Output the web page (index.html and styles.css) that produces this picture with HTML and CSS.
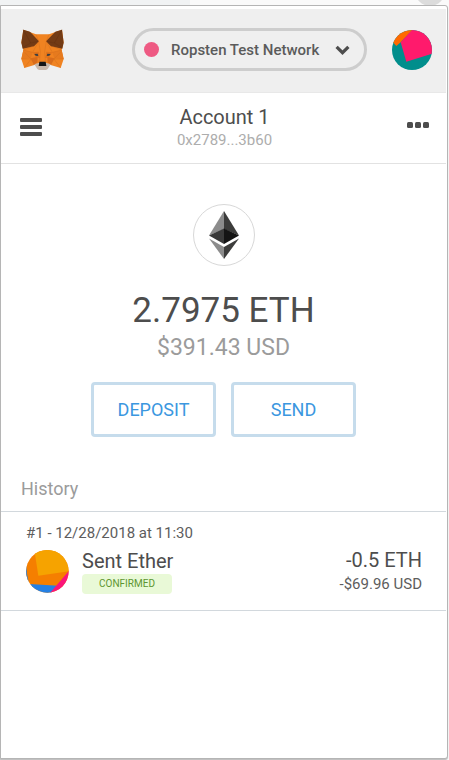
FILE: index.html
```
<!DOCTYPE html>
<html lang="en">
<head>
    <meta charset="UTF-8">
    <meta name="viewport" content="width=device-width, initial-scale=1.0">
    <title>MetaMask</title>
    <link rel="stylesheet" href="styles.css">
</head>
<body>
    <div class="browser-avatar"></div>
    <div class="popup">
        <header class="app-header">
            <svg class="fox" viewBox="63 90 129 123" aria-hidden="true">
                <!-- face -->
                <path fill="#f08321" d="M70 92 108 106H147L186 92 191 130 185 153 191 180 182 207 152 198H103L73 207 64 180 70 153 64 130Z"/>
                <path fill="#e67a1e" d="M70 153 98 160 92 178 64 180ZM185 153 157 160 163 178 191 180Z"/>
                <path fill="#d96c1a" d="M92 178 113 173 112 190 103 198ZM163 178 142 173 143 190 152 198Z"/>
                <path fill="#e0731c" d="M98 160 116 158 119 177 108 175ZM157 160 139 158 136 177 147 175Z"/>
                <!-- ears -->
                <path fill="#733b15" d="M70 92 90 98 117 127 102 142 68 149 64 131ZM186 92 166 98 138 127 153 142 187 149 191 131Z"/>
                <path fill="none" stroke="#5d2f10" stroke-width="1" d="M70 92 92 132 116 127M92 132 68 146M186 92 163 132 139 127M163 132 187 146"/>
                <path fill="none" stroke="#c8661a" stroke-width="1" d="M108 106 116 127 121 158 119 186M147 106 139 127 134 158 136 186M98 142 70 153 98 160 116 127M157 142 185 153 157 160 139 127M64 180H93L74 160M191 180H162L181 160M93 180 73 207M162 180 182 207M93 180 103 198M162 180 152 198"/>
                <!-- eyes -->
                <path fill="#3a3f42" d="M103 165 113 164 115 171 107 170ZM152 165 142 164 140 171 148 170Z"/>
                <!-- chin and nose -->
                <path fill="#c9b8aa" d="M103 196 115 192H140L152 196 143 210 138 213H117L112 210Z"/>
                <path fill="#161616" d="M118 188H137L139 201H116Z"/>
            </svg>

            <label class="network">
                <span class="network-dot"></span>
                <select class="network-select" aria-label="Network">
                    <option>Ropsten Test Network</option>
                </select>
                <svg class="network-arrow" viewBox="0 0 14 9" aria-hidden="true">
                    <path d="M1.5 1.5 7 7 12.5 1.5" fill="none" stroke="#4d4d4d" stroke-width="3"/>
                </svg>
            </label>

            <button class="icon-button" aria-label="My accounts">
                <svg class="account-avatar" viewBox="36 90 120 120">
                    <clipPath id="account-clip"><circle cx="96" cy="150" r="60"/></clipPath>
                    <g clip-path="url(#account-clip)">
                        <path fill="#018e8c" d="M36 90h120v120H36z"/>
                        <path fill="#ff6a00" d="M36 90H97L62 127 49 138 36 124Z"/>
                        <path fill="#ff1a6c" d="M98 88 62 127 79 185 158 161V88Z"/>
                    </g>
                </svg>
            </button>
        </header>

        <div class="account-bar">
            <button class="icon-button" aria-label="Menu">
                <svg class="menu-icon" viewBox="0 0 22 18" fill="#4d4d4d">
                    <rect y="0" width="22" height="4" rx="1"/>
                    <rect y="7" width="22" height="4" rx="1"/>
                    <rect y="14" width="22" height="4" rx="1"/>
                </svg>
            </button>
            <div class="account">
                <div class="account-name">Account 1</div>
                <div class="account-address">0x2789...3b60</div>
            </div>
            <button class="icon-button" aria-label="Account options">
                <svg class="dots-icon" viewBox="0 0 22 10" fill="#4d4d4d">
                    <rect x="0" width="6" height="6" rx="1.5"/>
                    <rect x="8" width="6" height="6" rx="1.5"/>
                    <rect x="16" width="6" height="6" rx="1.5"/>
                </svg>
            </button>
        </div>

        <main class="overview">
            <div class="token-icon">
                <svg class="eth-icon" viewBox="0 0 30 48" aria-hidden="true">
                    <path fill="#8c8c8c" d="M15 0 0 24.5 15 18Z"/>
                    <path fill="#3c3c3b" d="M15 0 30 24.5 15 18Z"/>
                    <path fill="#393939" d="M15 17.5 0 24.5 15 33Z"/>
                    <path fill="#141414" d="M15 17.5 30 24.5 15 33Z"/>
                    <path fill="#8c8c8c" d="M0 27.5 15 36V48Z"/>
                    <path fill="#3c3c3b" d="M30 27.5 15 36V48Z"/>
                </svg>
            </div>
            <div class="balance">2.7975 ETH</div>
            <div class="balance-fiat">$391.43 USD</div>
            <div class="actions">
                <button class="action-button">DEPOSIT</button>
                <button class="action-button">SEND</button>
            </div>
        </main>

        <section class="history">
            <h2 class="history-title">History</h2>
            <div class="transaction">
                <div class="transaction-date">#1 - 12/28/2018 at 11:30</div>
                <div class="transaction-row">
                    <svg class="transaction-avatar" viewBox="33 29 129 129" aria-hidden="true">
                        <clipPath id="transaction-clip"><circle cx="97" cy="93" r="64"/></clipPath>
                        <g clip-path="url(#transaction-clip)">
                            <path fill="#f57f00" d="M33 29h129v129H33z"/>
                            <path fill="#2580e3" d="M33 70 36 100 42 131 130 136 108 158H33Z"/>
                            <path fill="#f6a300" d="M58 29 70 106 162 93V29Z"/>
                            <path fill="#fb1579" d="M162 91 105 158H162Z"/>
                        </g>
                    </svg>
                    <div class="transaction-info">
                        <div class="transaction-name">Sent Ether</div>
                        <div class="transaction-status">CONFIRMED</div>
                    </div>
                    <div class="transaction-amounts">
                        <div class="transaction-eth">-0.5 ETH</div>
                        <div class="transaction-fiat">-$69.96 USD</div>
                    </div>
                </div>
            </div>
        </section>
    </div>
</body>
</html>
```
FILE: styles.css
```
* {
    box-sizing: border-box;
}

body {
    margin: 0;
    min-height: 100vh;
    padding: 5px 1px 1px 0;
    display: flex;
    overflow: hidden;
    font-family: Roboto, "Liberation Sans", sans-serif;
    color: #4d4d4d;
    background: linear-gradient(#f1f3f4, #f1f3f4) 0 0 / 190px 8px no-repeat, #fafafa;
}

button {
    font-family: inherit;
    cursor: pointer;
}

.browser-avatar {
    position: absolute;
    top: -24px;
    right: 4px;
    width: 30px;
    height: 30px;
    border-radius: 50%;
    background: #dcdcdc;
}

.popup {
    position: relative;
    flex: 1;
    padding: 3px 1px 0 0;
    background: #fff;
    border: 1px solid #b5b5b5;
    border-radius: 0 3px 3px 0;
    box-shadow: 0 1px 1px #bbb;
}

.app-header {
    display: flex;
    align-items: center;
    justify-content: space-between;
    height: 84px;
    padding: 0 14px 2px 20px;
    background: #efefef;
    border-bottom: 1px solid #e8e8e8;
}

.fox {
    width: 43px;
    height: 41px;
}

.network {
    display: flex;
    align-items: center;
    height: 43px;
    margin-left: 43px;
    padding: 0 14px 0 9px;
    border: 3px solid #cdcdcd;
    border-radius: 22px;
}

.network-dot {
    width: 15px;
    height: 15px;
    margin-right: 12px;
    border-radius: 50%;
    background: #ee5a83;
}

.network-select {
    appearance: none;
    padding: 0;
    border: 0;
    background: none;
    font: 500 15px/20px Roboto, "Liberation Sans", sans-serif;
    color: #5b5b5b;
}

.network-arrow {
    width: 15px;
    height: 10px;
    margin-left: 15px;
}

.icon-button {
    display: flex;
    padding: 0;
    border: 0;
    background: none;
}

.account-avatar {
    width: 40px;
    height: 40px;
}

.account-bar {
    display: flex;
    align-items: center;
    justify-content: space-between;
    height: 71px;
    padding: 0 17px 2px 19px;
    border-bottom: 1px solid #e2e2e2;
}

.account {
    padding-top: 2px;
    text-align: center;
}

.account-name {
    font-size: 20px;
    line-height: 24px;
}

.account-address {
    font-size: 15px;
    line-height: 22px;
    color: #adadad;
}

.menu-icon {
    width: 22px;
    height: 18px;
}

.dots-icon {
    width: 22px;
    height: 10px;
}

.overview {
    display: flex;
    flex-direction: column;
    align-items: center;
    padding-top: 40px;
}

.token-icon {
    display: flex;
    align-items: center;
    justify-content: center;
    width: 62px;
    height: 62px;
    border: 1px solid #d8d8d8;
    border-radius: 50%;
}

.eth-icon {
    width: 30px;
    height: 48px;
}

.balance {
    margin-top: 24px;
    font-size: 35px;
    line-height: 42px;
}

.balance-fiat {
    font-size: 23px;
    line-height: 32px;
    color: #9b9b9b;
}

.actions {
    display: flex;
    gap: 15px;
    margin-top: 18px;
}

.action-button {
    width: 125px;
    height: 55px;
    border: 3px solid #c6dcec;
    border-radius: 4px;
    background: #fff;
    font-size: 18px;
    color: #3b97df;
}

.history-title {
    margin: 40px 0 0;
    padding: 0 20px 10px;
    font-size: 18px;
    font-weight: 400;
    line-height: 24px;
    color: #9b9b9b;
    border-bottom: 1px solid #d2d8dd;
}

.transaction {
    padding: 11px 24px 15px 25px;
    border-bottom: 1px solid #d2d8dd;
}

.transaction-date {
    font-size: 15px;
    line-height: 20px;
    color: #5d5d5d;
}

.transaction-row {
    display: flex;
    align-items: center;
    margin-top: 4px;
}

.transaction-avatar {
    width: 43px;
    height: 43px;
}

.transaction-info {
    margin-left: 13px;
}

.transaction-name,
.transaction-eth {
    font-size: 20px;
    line-height: 26px;
}

.transaction-status {
    width: 90px;
    border-radius: 4px;
    background: #e9f9d7;
    font-size: 10px;
    line-height: 20px;
    text-align: center;
    color: #5d9630;
}

.transaction-amounts {
    margin-left: auto;
    text-align: right;
}

.transaction-fiat {
    font-size: 15px;
    line-height: 22px;
    color: #5d5d5d;
}
```
